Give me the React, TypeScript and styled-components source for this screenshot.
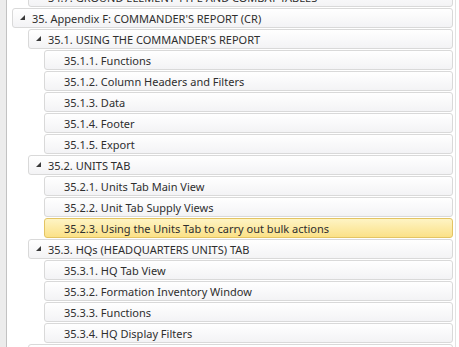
import React from "react";
import styled, { createGlobalStyle, css } from "styled-components";

const Global = createGlobalStyle`
  html, body { margin: 0; padding: 0; background: #ffffff; }
  body { width: 459px; height: 347px; overflow: hidden; font-family: "Noto Sans", "Open Sans", sans-serif; }
`;

const Frame = styled.div`
  display: flex;
  width: 459px;
  height: 347px;
  overflow: hidden;
`;

const LeftStrip = styled.div`
  width: 6px;
  flex: none;
  background: #ececec;
  border-right: 1px solid #c2c2c2;
`;

const RightStrip = styled.div`
  width: 3px;
  flex: none;
  margin-left: 2px;
  border-left: 1px solid #e2e2e2;
`;

const Tree = styled.div`
  flex: 1;
  display: flex;
  flex-direction: column;
  gap: 1px;
  margin-top: -13px;
  min-width: 0;
`;

const Row = styled.div<{ $level: number; $selected?: boolean }>`
  position: relative;
  flex: none;
  box-sizing: border-box;
  height: 20px;
  margin-left: ${(p) => 5 + p.$level * 16}px;
  padding-left: 19px;
  display: flex;
  align-items: center;
  border: 1px solid #d9d9d9;
  border-radius: 3px;
  background: linear-gradient(#ffffff, #f3f3f5);
  color: #2e2e2e;
  font-size: 11px;
  white-space: nowrap;
  overflow: hidden;
  ${(p) =>
    p.$selected &&
    css`
      border-color: #e3c463;
      background: linear-gradient(#fef4c4, #fbe187);
    `}
`;

const Arrow = styled.svg`
  position: absolute;
  left: 7px;
  top: 6px;
  width: 5px;
  height: 5px;
`;

type Item = { level: number; text: string; open?: boolean; selected?: boolean };

const items: Item[] = [
  { level: 1, text: "34.7. GROUND ELEMENT TYPE AND COMBAT TABLES" },
  { level: 0, text: "35. Appendix F: COMMANDER'S REPORT (CR)", open: true },
  { level: 1, text: "35.1. USING THE COMMANDER'S REPORT", open: true },
  { level: 2, text: "35.1.1. Functions" },
  { level: 2, text: "35.1.2. Column Headers and Filters" },
  { level: 2, text: "35.1.3. Data" },
  { level: 2, text: "35.1.4. Footer" },
  { level: 2, text: "35.1.5. Export" },
  { level: 1, text: "35.2. UNITS TAB", open: true },
  { level: 2, text: "35.2.1. Units Tab Main View" },
  { level: 2, text: "35.2.2. Unit Tab Supply Views" },
  { level: 2, text: "35.2.3. Using the Units Tab to carry out bulk actions", selected: true },
  { level: 1, text: "35.3. HQs (HEADQUARTERS UNITS) TAB", open: true },
  { level: 2, text: "35.3.1. HQ Tab View" },
  { level: 2, text: "35.3.2. Formation Inventory Window" },
  { level: 2, text: "35.3.3. Functions" },
  { level: 2, text: "35.3.4. HQ Display Filters" },
  { level: 1, text: "35.4. SUPPLY TAB", open: true },
];

export default function App() {
  return (
    <>
      <Global />
      <Frame>
        <LeftStrip />
        <Tree>
          {items.map((it, i) => (
            <Row key={i} $level={it.level} $selected={it.selected}>
              {it.open && (
                <Arrow viewBox="0 0 5 5">
                  <polygon points="5,0 5,5 0,5" fill="#3a3a3a" />
                </Arrow>
              )}
              {it.text}
            </Row>
          ))}
        </Tree>
        <RightStrip />
      </Frame>
    </>
  );
}
